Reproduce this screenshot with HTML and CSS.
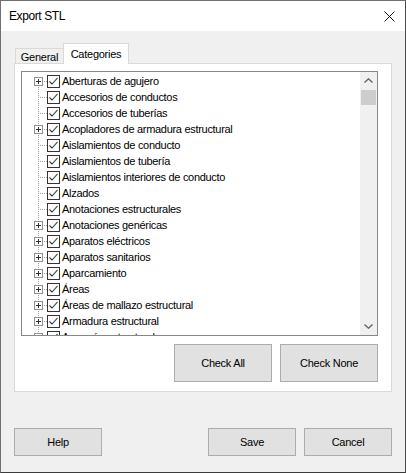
FILE: index.html
```html
<!DOCTYPE html>
<html lang="es">
<head>
<meta charset="utf-8">
<title>Export STL</title>
<link rel="stylesheet" href="styles.css">
</head>
<body>
<div class="window">
  <div class="titlebar">
    <span class="title">Export STL</span>
    <svg class="close" width="11" height="11" viewBox="0 0 11 11"><path d="M0.5 0.5L10.5 10.5M10.5 0.5L0.5 10.5" stroke="#111" stroke-width="1" fill="none"/></svg>
  </div>
  <div class="client">
    <div class="tabs">
      <div class="tab">General</div>
      <div class="tab active">Categories</div>
    </div>
    <div class="panel">
      <div class="tree">
        <div class="list">
          <div class="row first"><svg class="exp" width="9" height="9"><rect x=".5" y=".5" width="8" height="8" fill="#fff" stroke="#919191"/><path d="M2 4.5h5M4.5 2v5" stroke="#333"/></svg><svg class="cb" width="13" height="13"><rect x=".5" y=".5" width="12" height="12" fill="#fff" stroke="#333"/><path d="M2.5 6.5L5 9L10.5 3" fill="none" stroke="#333" stroke-width="1.1"/></svg><span class="lbl">Aberturas de agujero</span></div>
          <div class="row"><span class="exp"></span><svg class="cb" width="13" height="13"><rect x=".5" y=".5" width="12" height="12" fill="#fff" stroke="#333"/><path d="M2.5 6.5L5 9L10.5 3" fill="none" stroke="#333" stroke-width="1.1"/></svg><span class="lbl">Accesorios de conductos</span></div>
          <div class="row"><span class="exp"></span><svg class="cb" width="13" height="13"><rect x=".5" y=".5" width="12" height="12" fill="#fff" stroke="#333"/><path d="M2.5 6.5L5 9L10.5 3" fill="none" stroke="#333" stroke-width="1.1"/></svg><span class="lbl">Accesorios de tuberías</span></div>
          <div class="row"><svg class="exp" width="9" height="9"><rect x=".5" y=".5" width="8" height="8" fill="#fff" stroke="#919191"/><path d="M2 4.5h5M4.5 2v5" stroke="#333"/></svg><svg class="cb" width="13" height="13"><rect x=".5" y=".5" width="12" height="12" fill="#fff" stroke="#333"/><path d="M2.5 6.5L5 9L10.5 3" fill="none" stroke="#333" stroke-width="1.1"/></svg><span class="lbl">Acopladores de armadura estructural</span></div>
          <div class="row"><span class="exp"></span><svg class="cb" width="13" height="13"><rect x=".5" y=".5" width="12" height="12" fill="#fff" stroke="#333"/><path d="M2.5 6.5L5 9L10.5 3" fill="none" stroke="#333" stroke-width="1.1"/></svg><span class="lbl">Aislamientos de conducto</span></div>
          <div class="row"><span class="exp"></span><svg class="cb" width="13" height="13"><rect x=".5" y=".5" width="12" height="12" fill="#fff" stroke="#333"/><path d="M2.5 6.5L5 9L10.5 3" fill="none" stroke="#333" stroke-width="1.1"/></svg><span class="lbl">Aislamientos de tubería</span></div>
          <div class="row"><span class="exp"></span><svg class="cb" width="13" height="13"><rect x=".5" y=".5" width="12" height="12" fill="#fff" stroke="#333"/><path d="M2.5 6.5L5 9L10.5 3" fill="none" stroke="#333" stroke-width="1.1"/></svg><span class="lbl">Aislamientos interiores de conducto</span></div>
          <div class="row"><span class="exp"></span><svg class="cb" width="13" height="13"><rect x=".5" y=".5" width="12" height="12" fill="#fff" stroke="#333"/><path d="M2.5 6.5L5 9L10.5 3" fill="none" stroke="#333" stroke-width="1.1"/></svg><span class="lbl">Alzados</span></div>
          <div class="row"><span class="exp"></span><svg class="cb" width="13" height="13"><rect x=".5" y=".5" width="12" height="12" fill="#fff" stroke="#333"/><path d="M2.5 6.5L5 9L10.5 3" fill="none" stroke="#333" stroke-width="1.1"/></svg><span class="lbl">Anotaciones estructurales</span></div>
          <div class="row"><svg class="exp" width="9" height="9"><rect x=".5" y=".5" width="8" height="8" fill="#fff" stroke="#919191"/><path d="M2 4.5h5M4.5 2v5" stroke="#333"/></svg><svg class="cb" width="13" height="13"><rect x=".5" y=".5" width="12" height="12" fill="#fff" stroke="#333"/><path d="M2.5 6.5L5 9L10.5 3" fill="none" stroke="#333" stroke-width="1.1"/></svg><span class="lbl">Anotaciones genéricas</span></div>
          <div class="row"><svg class="exp" width="9" height="9"><rect x=".5" y=".5" width="8" height="8" fill="#fff" stroke="#919191"/><path d="M2 4.5h5M4.5 2v5" stroke="#333"/></svg><svg class="cb" width="13" height="13"><rect x=".5" y=".5" width="12" height="12" fill="#fff" stroke="#333"/><path d="M2.5 6.5L5 9L10.5 3" fill="none" stroke="#333" stroke-width="1.1"/></svg><span class="lbl">Aparatos eléctricos</span></div>
          <div class="row"><svg class="exp" width="9" height="9"><rect x=".5" y=".5" width="8" height="8" fill="#fff" stroke="#919191"/><path d="M2 4.5h5M4.5 2v5" stroke="#333"/></svg><svg class="cb" width="13" height="13"><rect x=".5" y=".5" width="12" height="12" fill="#fff" stroke="#333"/><path d="M2.5 6.5L5 9L10.5 3" fill="none" stroke="#333" stroke-width="1.1"/></svg><span class="lbl">Aparatos sanitarios</span></div>
          <div class="row"><svg class="exp" width="9" height="9"><rect x=".5" y=".5" width="8" height="8" fill="#fff" stroke="#919191"/><path d="M2 4.5h5M4.5 2v5" stroke="#333"/></svg><svg class="cb" width="13" height="13"><rect x=".5" y=".5" width="12" height="12" fill="#fff" stroke="#333"/><path d="M2.5 6.5L5 9L10.5 3" fill="none" stroke="#333" stroke-width="1.1"/></svg><span class="lbl">Aparcamiento</span></div>
          <div class="row"><svg class="exp" width="9" height="9"><rect x=".5" y=".5" width="8" height="8" fill="#fff" stroke="#919191"/><path d="M2 4.5h5M4.5 2v5" stroke="#333"/></svg><svg class="cb" width="13" height="13"><rect x=".5" y=".5" width="12" height="12" fill="#fff" stroke="#333"/><path d="M2.5 6.5L5 9L10.5 3" fill="none" stroke="#333" stroke-width="1.1"/></svg><span class="lbl">Áreas</span></div>
          <div class="row"><svg class="exp" width="9" height="9"><rect x=".5" y=".5" width="8" height="8" fill="#fff" stroke="#919191"/><path d="M2 4.5h5M4.5 2v5" stroke="#333"/></svg><svg class="cb" width="13" height="13"><rect x=".5" y=".5" width="12" height="12" fill="#fff" stroke="#333"/><path d="M2.5 6.5L5 9L10.5 3" fill="none" stroke="#333" stroke-width="1.1"/></svg><span class="lbl">Áreas de mallazo estructural</span></div>
          <div class="row"><svg class="exp" width="9" height="9"><rect x=".5" y=".5" width="8" height="8" fill="#fff" stroke="#919191"/><path d="M2 4.5h5M4.5 2v5" stroke="#333"/></svg><svg class="cb" width="13" height="13"><rect x=".5" y=".5" width="12" height="12" fill="#fff" stroke="#333"/><path d="M2.5 6.5L5 9L10.5 3" fill="none" stroke="#333" stroke-width="1.1"/></svg><span class="lbl">Armadura estructural</span></div>
          <div class="row"><svg class="exp" width="9" height="9"><rect x=".5" y=".5" width="8" height="8" fill="#fff" stroke="#919191"/><path d="M2 4.5h5M4.5 2v5" stroke="#333"/></svg><svg class="cb" width="13" height="13"><rect x=".5" y=".5" width="12" height="12" fill="#fff" stroke="#333"/><path d="M2.5 6.5L5 9L10.5 3" fill="none" stroke="#333" stroke-width="1.1"/></svg><span class="lbl">Armazón estructural</span></div>
        </div>
        <div class="scrollbar">
          <div class="sbtn"><svg width="9" height="5" viewBox="0 0 9 5"><path d="M0.5 4.5L4.5 0.8L8.5 4.5" fill="none" stroke="#606060" stroke-width="1.3"/></svg></div>
          <div class="track"><div class="thumb"></div></div>
          <div class="sbtn"><svg width="9" height="5" viewBox="0 0 9 5"><path d="M0.5 0.5L4.5 4.2L8.5 0.5" fill="none" stroke="#606060" stroke-width="1.3"/></svg></div>
        </div>
      </div>
      <div class="panel-buttons">
        <button class="btn big">Check All</button>
        <button class="btn big">Check None</button>
      </div>
    </div>
    <div class="footer">
      <button class="btn">Help</button>
      <div class="footer-right">
        <button class="btn">Save</button>
        <button class="btn">Cancel</button>
      </div>
    </div>
  </div>
</div>
</body>
</html>
```

FILE: styles.css
```css
html, body {
  margin: 0;
  padding: 0;
  background: #f0f0f0;
}

body {
  font-family: "Liberation Sans", Arial, sans-serif;
  font-size: 11px;
  letter-spacing: -0.25px;
  color: #000;
}

.window {
  width: 406px;
  height: 473px;
  box-sizing: border-box;
  border: 1px solid #707070;
  border-right-color: #4a4a4a;
  border-bottom-color: #3a3a3a;
  background: #f0f0f0;
  display: flex;
  flex-direction: column;
}

.titlebar {
  height: 30px;
  background: #fff;
  display: flex;
  align-items: center;
  justify-content: space-between;
  padding: 0 10px 0 8px;
  flex: none;
}

.title {
  font-size: 12px;
  letter-spacing: -0.4px;
  color: #000;
}

.close {
  display: block;
  margin-top: 1px;
}

.client {
  flex: 1;
  display: flex;
  flex-direction: column;
  padding: 12px 13px 0 13px;
}

.tabs {
  display: flex;
  align-items: flex-end;
  height: 20px;
  padding-left: 1px;
}

.tab {
  box-sizing: border-box;
  height: 15px;
  width: 48px;
  border: 1px solid #d9d9d9;
  border-right: none;
  border-bottom: none;
  background: #f0f0f0;
  display: flex;
  align-items: center;
  justify-content: center;
  padding-top: 1px;
}

.tab.active {
  width: 66px;
  height: 21px;
  margin-bottom: -1px;
  background: #fff;
  border-right: 1px solid #d9d9d9;
  position: relative;
  z-index: 1;
  padding-top: 0;
  padding-bottom: 1px;
}

.panel {
  box-sizing: border-box;
  width: 378px;
  border: 1px solid #d9d9d9;
  background: #fff;
  padding: 7px 13px 9px 6px;
  display: flex;
  flex-direction: column;
}

.tree {
  box-sizing: border-box;
  width: 357px;
  height: 265px;
  border: 1px solid #828790;
  background: #fff;
  display: flex;
  overflow: hidden;
}

.list {
  flex: 1;
  overflow: hidden;
  padding-top: 1px;
  letter-spacing: -0.3px;
}

.row {
  height: 16px;
  display: flex;
  align-items: center;
  padding-left: 12px;
  white-space: nowrap;
  background-image:
    repeating-linear-gradient(to bottom, #a0a0a0 0 1px, transparent 1px 2px),
    repeating-linear-gradient(to right, #a0a0a0 0 1px, transparent 1px 2px);
  background-size: 1px 16px, 9px 1px;
  background-position: 16px 0, 16px 8px;
  background-repeat: no-repeat;
}

.row.first {
  background-size: 1px 8px, 9px 1px;
  background-position: 16px 8px, 16px 8px;
}

.exp {
  display: block;
  width: 9px;
  height: 9px;
  flex: none;
  margin-top: 1px;
}

.cb {
  display: block;
  flex: none;
  margin-left: 4px;
}

.lbl {
  margin-left: 2px;
  line-height: 16px;
}

.scrollbar {
  width: 17px;
  flex: none;
  background: #f0f0f0;
  display: flex;
  flex-direction: column;
}

.sbtn {
  height: 17px;
  display: flex;
  align-items: center;
  justify-content: center;
  flex: none;
}

.sbtn svg {
  display: block;
}

.track {
  flex: 1;
  padding: 1px 1px 0 1px;
}

.thumb {
  height: 15px;
  background: #cdcdcd;
}

.panel-buttons {
  display: flex;
  justify-content: flex-end;
  gap: 8px;
  margin-top: 8px;
  width: 357px;
}

.btn {
  box-sizing: border-box;
  font-family: "Liberation Sans", Arial, sans-serif;
  font-size: 11px;
  letter-spacing: -0.25px;
  color: #000;
  background: #e1e1e1;
  border: 1px solid #adadad;
  border-radius: 0;
  padding: 0;
  margin: 0;
  width: 88px;
  height: 28px;
}

.btn.big {
  width: 98px;
  height: 38px;
}

.footer {
  display: flex;
  justify-content: space-between;
  margin-top: 36px;
}

.footer-right {
  display: flex;
  gap: 8px;
}
```
